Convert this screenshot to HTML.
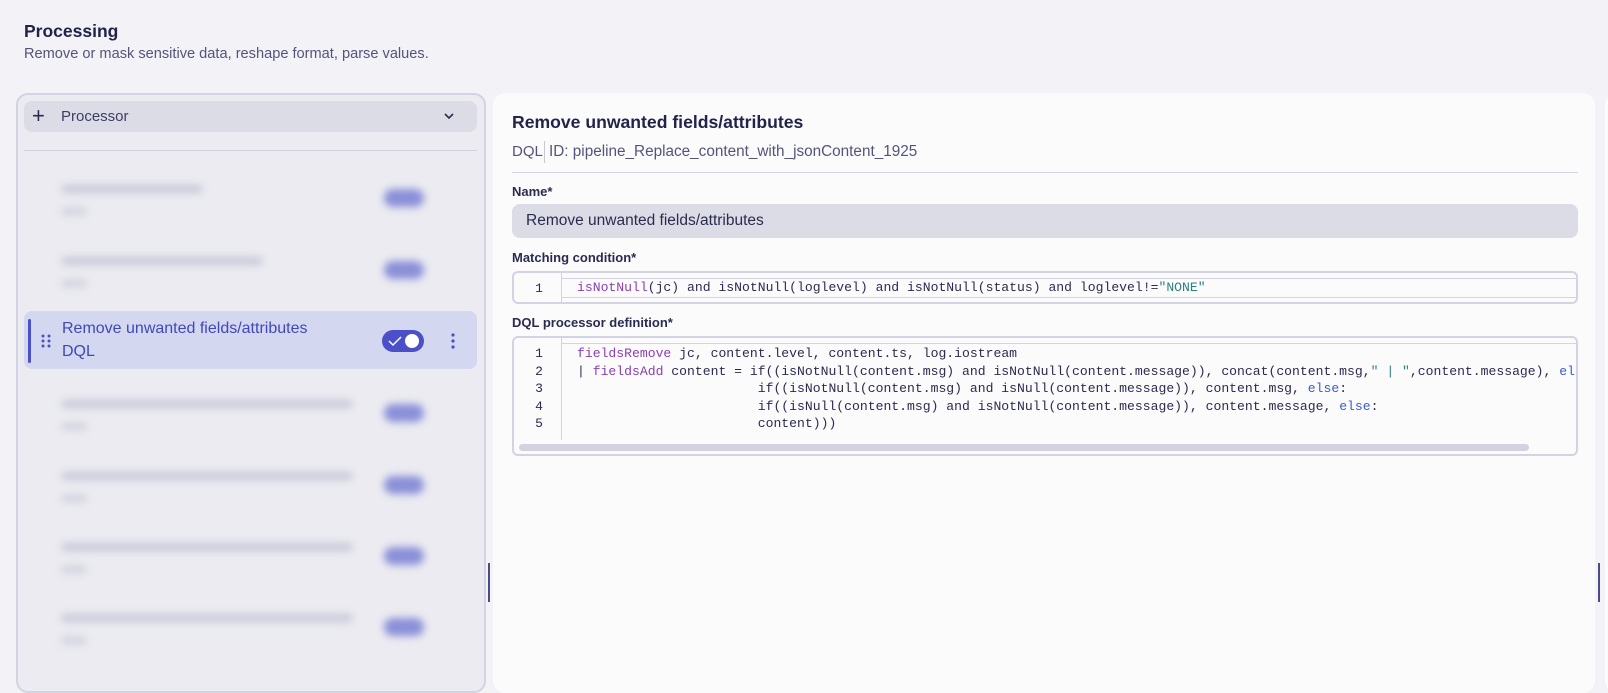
<!DOCTYPE html>
<html><head><style>
*{box-sizing:border-box;margin:0;padding:0}
body{width:1608px;height:677px;overflow:hidden;background:#f2f2f7;font-family:"Liberation Sans",sans-serif;color:#2b2b4f;position:relative}
.abs{position:absolute}
.h1{left:24px;top:21px;font-size:17.5px;font-weight:bold;color:#23234a}
.sub{left:24px;top:46px;font-size:14.6px;color:#54547a}
.left{left:16px;top:93px;width:470px;height:600px;border:2px solid #d3d3e4;border-radius:12px;background:#ebebf1}
.btn{left:24px;top:101px;width:453px;height:31px;background:#dcdce6;border-radius:8px}
.row{left:24px;width:453px;height:58px}
.blur{filter:blur(4px)}
.right{left:493px;top:93px;width:1102px;height:600px;background:#fbfbfc;border-radius:12px}
.lbl{font-size:13px;font-weight:bold;color:#2b2b4f}
.code{font-family:"Liberation Mono",monospace;font-size:13.1px;color:#2b2b4f;white-space:pre;line-height:17.5px}
.kw{color:#8b3fb3}.el{color:#3a5ccc}.st{color:#2b8080}
.ln{position:absolute;left:0;width:50px;text-align:center;font-family:"Liberation Mono",monospace;font-size:13px;color:#2b2b4f}
</style></head><body>
<div class="abs h1">Processing</div>
<div class="abs sub">Remove or mask sensitive data, reshape format, parse values.</div>
<div class="abs left"></div>
<div class="abs btn">
 <div class="abs" style="left:8px;top:6px;font-size:22px;line-height:18px;color:#2b2b4f">+</div>
 <div class="abs" style="left:37px;top:7px;font-size:15px;color:#3d3d66">Processor</div>
 <svg class="abs" style="left:420px;top:11px" width="10" height="8"><path d="M1 2 L5 6 L9 2" fill="none" stroke="#2b2b4f" stroke-width="1.6"/></svg>
</div>
<div class="abs" style="left:24px;top:150px;width:453px;height:1px;background:#d0d0e0"></div>

<div class="abs blur" style="left:0;top:0;width:490px;height:677px">
 <div class="abs" style="left:62px;top:185px;width:140px;height:8px;background:#c9c9d9"></div>
 <div class="abs" style="left:62px;top:208px;width:24px;height:7px;background:#d0d0de"></div>
 <div class="abs" style="left:384px;top:189px;width:40px;height:18px;border-radius:9px;background:#8a8fd8"></div>
 <div class="abs" style="left:62px;top:257px;width:200px;height:8px;background:#c9c9d9"></div>
 <div class="abs" style="left:62px;top:280px;width:24px;height:7px;background:#d0d0de"></div>
 <div class="abs" style="left:384px;top:261px;width:40px;height:18px;border-radius:9px;background:#8a8fd8"></div>
 <div class="abs" style="left:62px;top:400px;width:290px;height:8px;background:#c9c9d9"></div>
 <div class="abs" style="left:62px;top:423px;width:24px;height:7px;background:#d0d0de"></div>
 <div class="abs" style="left:384px;top:404px;width:40px;height:18px;border-radius:9px;background:#8a8fd8"></div>
 <div class="abs" style="left:62px;top:472px;width:290px;height:8px;background:#c9c9d9"></div>
 <div class="abs" style="left:62px;top:495px;width:24px;height:7px;background:#d0d0de"></div>
 <div class="abs" style="left:384px;top:476px;width:40px;height:18px;border-radius:9px;background:#8a8fd8"></div>
 <div class="abs" style="left:62px;top:543px;width:290px;height:8px;background:#c9c9d9"></div>
 <div class="abs" style="left:62px;top:566px;width:24px;height:7px;background:#d0d0de"></div>
 <div class="abs" style="left:384px;top:547px;width:40px;height:18px;border-radius:9px;background:#8a8fd8"></div>
 <div class="abs" style="left:62px;top:614px;width:290px;height:8px;background:#c9c9d9"></div>
 <div class="abs" style="left:62px;top:637px;width:24px;height:7px;background:#d0d0de"></div>
 <div class="abs" style="left:384px;top:618px;width:40px;height:18px;border-radius:9px;background:#8a8fd8"></div>
</div>

<div class="abs row" style="top:311px;background:#d3d8f0;border-radius:8px">
 <div class="abs" style="left:4px;top:8px;width:3px;height:44px;background:#4b50c8;border-radius:2px"></div>
 <svg class="abs" style="left:17px;top:23px" width="10" height="14"><g fill="#4b50c8"><circle cx="2" cy="2" r="1.5"/><circle cx="8" cy="2" r="1.5"/><circle cx="2" cy="7" r="1.5"/><circle cx="8" cy="7" r="1.5"/><circle cx="2" cy="12" r="1.5"/><circle cx="8" cy="12" r="1.5"/></g></svg>
 <div class="abs" style="left:38px;top:9px;font-size:16px;color:#4047b8">Remove unwanted fields/attributes</div>
 <div class="abs" style="left:38px;top:32px;font-size:16px;color:#4047b8">DQL</div>
 <div class="abs" style="left:358px;top:19px;width:42px;height:22px;border-radius:11px;background:#4b50c8">
  <svg class="abs" style="left:6px;top:6px" width="14" height="11"><path d="M1 5 L5 9 L13 1" fill="none" stroke="#fff" stroke-width="1.5"/></svg>
  <div class="abs" style="left:23px;top:4px;width:14px;height:14px;border-radius:7px;background:#fff"></div>
 </div>
 <svg class="abs" style="left:426px;top:21px" width="6" height="18"><g fill="#4b50c8"><circle cx="3" cy="3" r="1.6"/><circle cx="3" cy="9" r="1.6"/><circle cx="3" cy="15" r="1.6"/></g></svg>
</div>
<div class="abs" style="left:488px;top:563px;width:2px;height:39px;background:#4a4a8a"></div>

<div class="abs right"></div>
<div class="abs" style="left:1598px;top:563px;width:2px;height:39px;background:#4a4a8a"></div>
<div class="abs" style="left:1605px;top:93px;width:50px;height:600px;background:#fbfbfc;border-radius:12px"></div>

<div class="abs" style="left:512px;top:112px;font-size:17.6px;font-weight:bold;color:#23234a">Remove unwanted fields/attributes</div>
<div class="abs" style="left:512px;top:143px;font-size:15px;color:#54547a">DQL</div>
<div class="abs" style="left:544px;top:141px;width:1px;height:22px;background:#c8c8da"></div>
<div class="abs" style="left:549px;top:143px;font-size:15.3px;color:#54547a">ID: pipeline_Replace_content_with_jsonContent_1925</div>
<div class="abs" style="left:512px;top:172px;width:1066px;height:1px;background:#d3d3e4"></div>
<div class="abs lbl" style="left:512px;top:184px">Name*</div>
<div class="abs" style="left:512px;top:204px;width:1066px;height:34px;background:#dcdce6;border-radius:8px"></div>
<div class="abs" style="left:526px;top:212px;font-size:15.5px;color:#2b2b4f">Remove unwanted fields/attributes</div>
<div class="abs lbl" style="left:512px;top:250px">Matching condition*</div>
<div class="abs" style="left:512px;top:271px;width:1066px;height:33px;border:2px solid #d3d3e4;border-radius:6px;overflow:hidden;background:#fbfbfc">
 <div class="abs" style="left:47px;top:0;width:1px;height:34px;background:#d3d3e4"></div>
 <div class="abs" style="left:47px;top:5px;width:1030px;height:1px;background:#d3d3e4"></div>
 <div class="abs" style="left:47px;top:24px;width:1030px;height:1px;background:#d3d3e4"></div>
 <div class="ln" style="top:8px">1</div>
 <div class="abs code" style="left:63px;top:6px"><span class="kw">isNotNull</span>(jc) and isNotNull(loglevel) and isNotNull(status) and loglevel!=<span class="st">"NONE"</span></div>
</div>
<div class="abs lbl" style="left:512px;top:315px">DQL processor definition*</div>
<div class="abs" style="left:512px;top:336px;width:1066px;height:120px;border:2px solid #d3d3e4;border-radius:6px;overflow:hidden;background:#fbfbfc">
 <div class="abs" style="left:47px;top:0;width:1px;height:102px;background:#d3d3e4"></div>
 <div class="abs" style="left:47px;top:5px;width:1030px;height:1px;background:#d3d3e4"></div>
 <div class="ln" style="top:7px;line-height:17.5px">1<br>2<br>3<br>4<br>5</div>
 <div class="abs code" style="left:63px;top:7px"><span class="kw">fieldsRemove</span> jc, content.level, content.ts, log.iostream
| <span class="kw">fieldsAdd</span> content = if((isNotNull(content.msg) and isNotNull(content.message)), concat(content.msg,<span class="st">" | "</span>,content.message), <span class="el">else</span>:
                       if((isNotNull(content.msg) and isNull(content.message)), content.msg, <span class="el">else</span>:
                       if((isNull(content.msg) and isNotNull(content.message)), content.message, <span class="el">else</span>:
                       content)))</div>
 <div class="abs" style="left:5px;top:106px;width:1010px;height:7px;border-radius:4px;background:#d3d3e0"></div>
</div>
</body></html>
